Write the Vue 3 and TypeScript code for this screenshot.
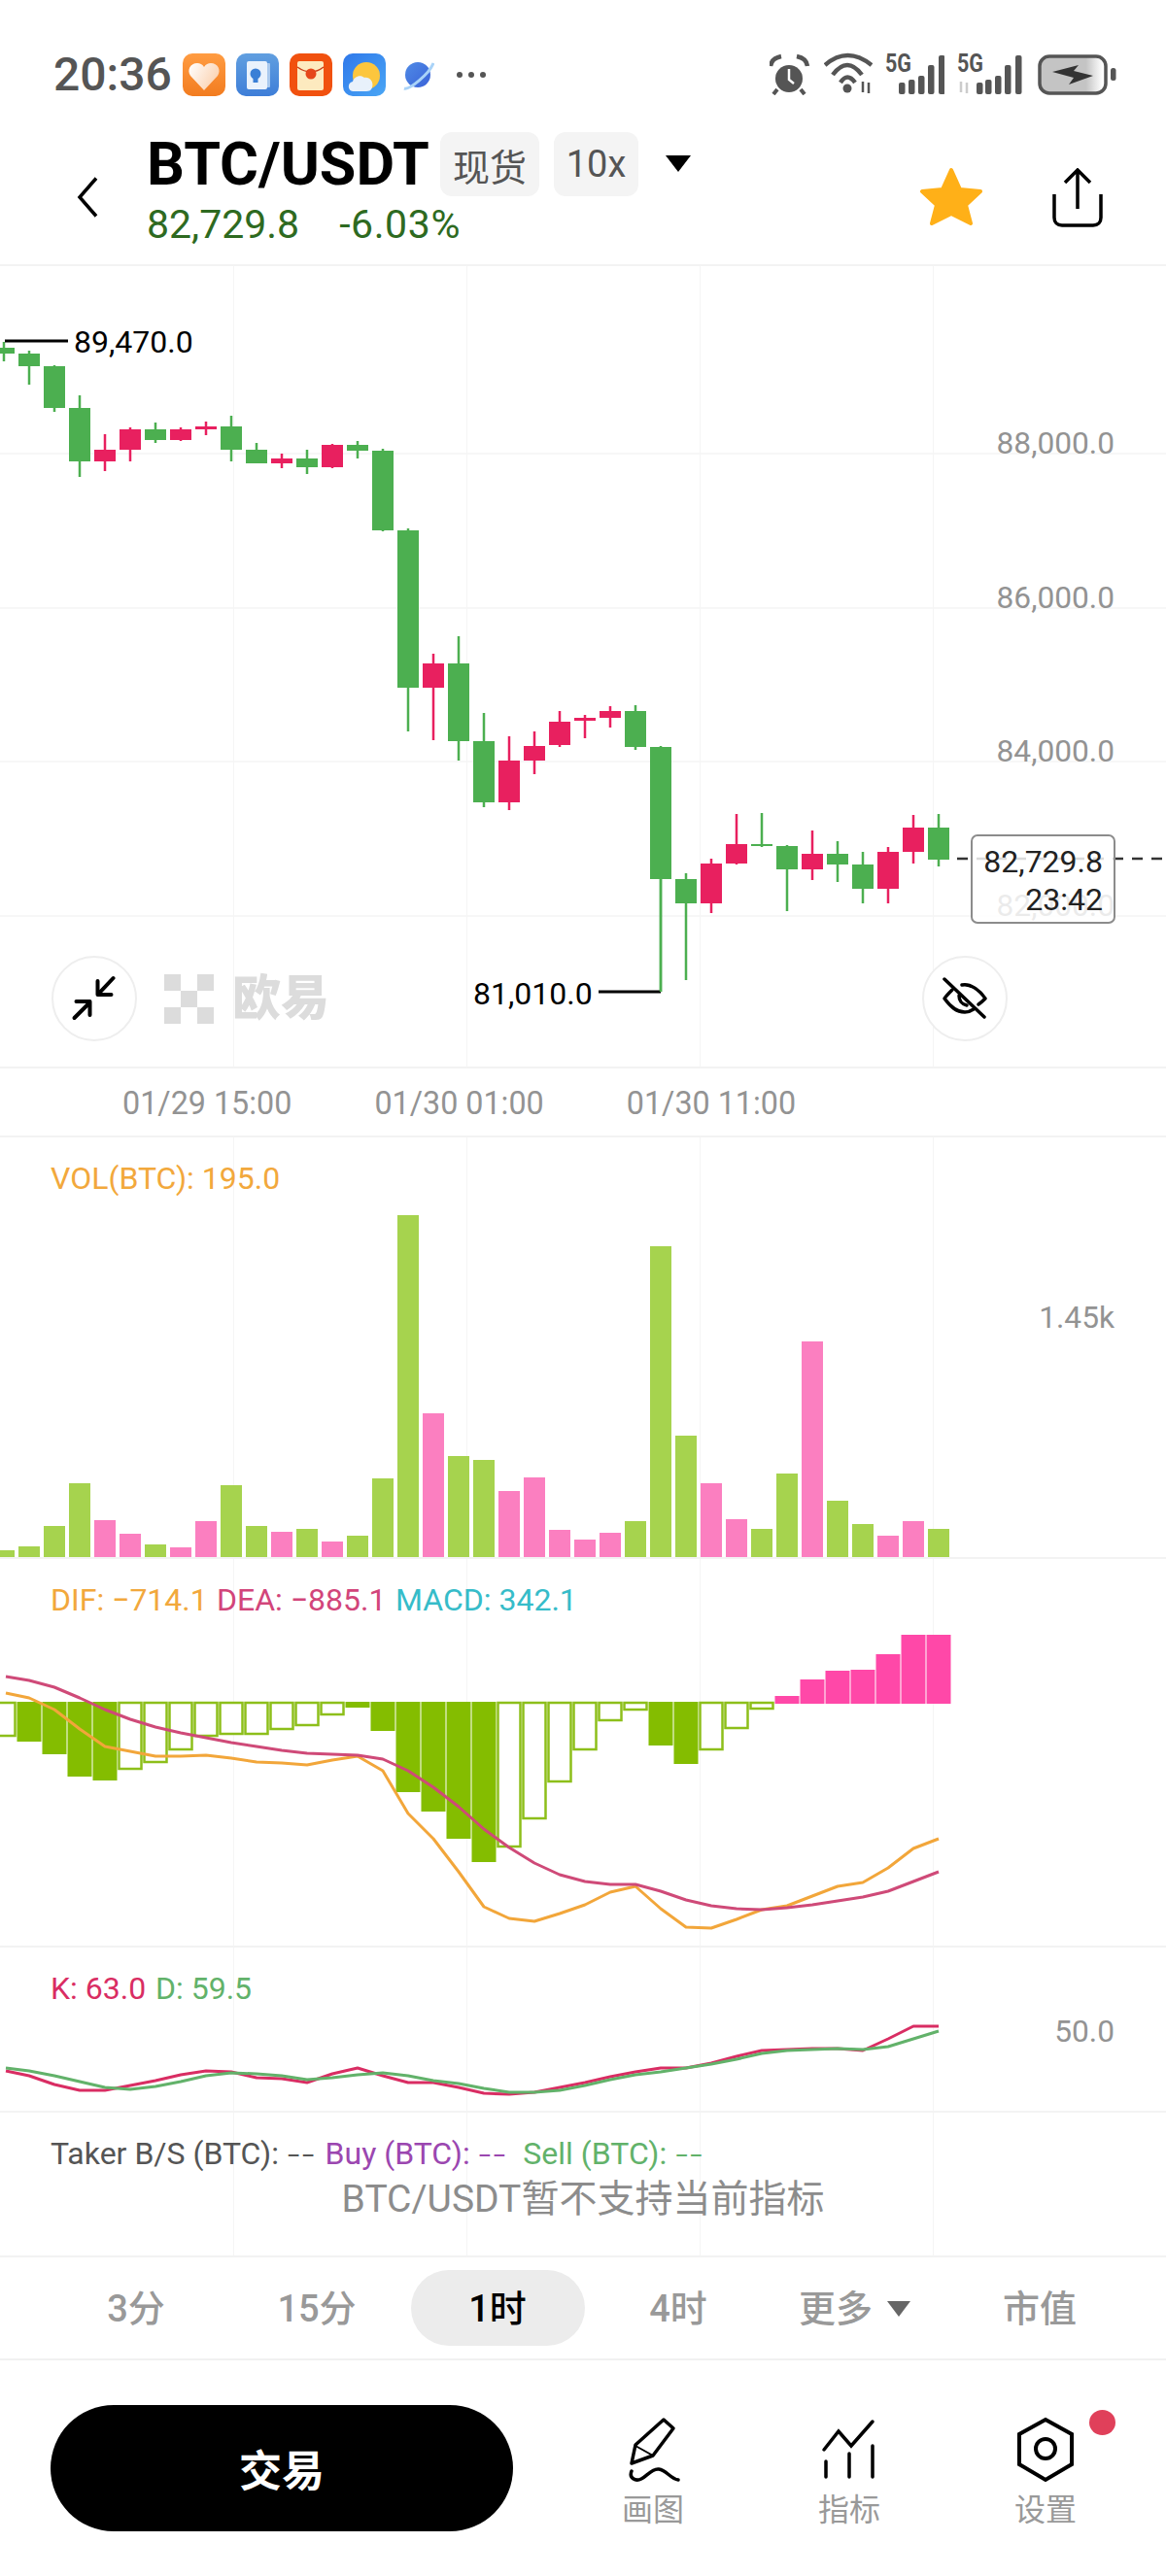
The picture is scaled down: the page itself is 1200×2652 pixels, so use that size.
<script setup lang="ts">
type Side = 'up' | 'down'
// bodyTop, bodyBottom, wickTop, wickBottom, colour
type Candle = [number, number, number, number, Side]

const STEP = 26
const xAt = (i: number) => 4 + STEP * i

const candles: Candle[] = [
  [358, 364, 352, 372, 'up'], [364, 377, 361, 396, 'up'], [377, 420, 376, 424, 'up'], [420, 475, 407, 491, 'up'],
  [463, 475, 447, 485, 'down'], [442, 463, 440, 475, 'down'], [442, 453, 435, 456, 'up'], [442, 453, 440, 454, 'down'],
  [439, 442, 434, 448, 'down'], [439, 463, 428, 475, 'up'], [463, 477, 456, 477, 'up'], [472, 477, 467, 482, 'down'],
  [472, 481, 463, 488, 'up'], [458, 481, 457, 482, 'down'], [458, 464, 454, 472, 'up'], [464, 546, 462, 547, 'up'],
  [546, 708, 544, 753, 'up'], [683, 708, 673, 762, 'down'], [683, 763, 655, 783, 'up'], [763, 826, 734, 831, 'up'],
  [783, 826, 758, 834, 'down'], [768, 783, 753, 797, 'down'], [743, 767, 732, 769, 'down'], [739, 742, 736, 760, 'down'],
  [732, 739, 727, 749, 'down'], [732, 769, 726, 772, 'up'], [769, 905, 768, 1021, 'up'], [905, 930, 899, 1009, 'up'],
  [889, 930, 884, 940, 'down'], [869, 889, 838, 890, 'down'], [869, 871, 837, 872, 'up'], [871, 895, 870, 938, 'up'],
  [879, 895, 855, 906, 'down'], [879, 890, 866, 908, 'up'], [890, 915, 877, 930, 'up'], [877, 915, 872, 930, 'down'],
  [852, 877, 839, 889, 'down'], [852, 885, 838, 892, 'up'],
]

const volumes = [7, 11, 32, 76, 38, 24, 13, 10, 37, 74, 32, 26, 29, 16, 22, 81, 352, 148, 104, 100, 68, 82, 28, 18, 25, 37, 320, 125, 76, 39, 29, 86, 222, 58, 34, 22, 37, 29]

// negative = below the zero line
const macd = [-34, -40, -53, -76, -80, -68, -61, -48, -34, -32, -32, -27, -23, -12, -5, -29, -92, -112, -140, -164, -148, -119, -81, -48, -18, -7, -44, -63, -48, -26, -6, 8, 25, 34, 35, 51, 71, 71]
const hollow = new Set([0, 5, 6, 7, 8, 9, 10, 11, 12, 13, 20, 21, 22, 23, 24, 25, 28, 29, 30])

const dea = [1726, 1730, 1737, 1748, 1760, 1770, 1778, 1784, 1789, 1794, 1798, 1802, 1805, 1806, 1807, 1811, 1823, 1840, 1860, 1883, 1902, 1918, 1930, 1937, 1940, 1940, 1947, 1956, 1962, 1965, 1966, 1964, 1961, 1957, 1953, 1947, 1937, 1927]
const dif = [1743, 1748, 1760, 1780, 1798, 1803, 1808, 1808, 1807, 1810, 1814, 1815, 1817, 1812, 1808, 1823, 1867, 1893, 1927, 1963, 1975, 1978, 1970, 1961, 1948, 1942, 1965, 1984, 1985, 1976, 1966, 1962, 1952, 1942, 1938, 1923, 1903, 1893]
const kLine = [2132, 2137, 2146, 2152, 2152, 2147, 2142, 2136, 2132, 2133, 2139, 2140, 2144, 2135, 2129, 2137, 2144, 2144, 2149, 2155, 2156, 2154, 2149, 2144, 2138, 2133, 2129, 2129, 2124, 2117, 2111, 2110, 2109, 2109, 2111, 2099, 2086, 2086]
const dLine = [2129, 2132, 2137, 2143, 2149, 2151, 2148, 2143, 2137, 2134, 2135, 2137, 2141, 2139, 2136, 2134, 2137, 2142, 2145, 2150, 2154, 2154, 2152, 2147, 2141, 2136, 2133, 2129, 2125, 2120, 2114, 2111, 2110, 2109, 2110, 2107, 2099, 2091]

const points = (ys: number[]) => ys.map((y, i) => `${Math.max(xAt(i), 6)},${y}`).join(' ')

const gridY = [467, 626, 784, 943]
const priceAxis = [
  { label: '88,000.0', y: 467 },
  { label: '86,000.0', y: 626 },
  { label: '84,000.0', y: 784 },
  { label: '82,000.0', y: 943 },
]
const dates = ['01/29 15:00', '01/30 01:00', '01/30 11:00']
const barTops = [85, 82, 78, 67, 57]
const signalA = [925, 935, 945, 955, 966]
const signalB = [1005, 1014, 1024, 1034, 1045]
const tabs = ['3分', '15分', '1时', '4时', '更多', '市值']
</script>

<template>
  <div class="page">
    <div class="status">
      <span class="clock">20:36</span>
      <svg class="app" width="44" height="44" viewBox="0 0 44 44">
        <defs>
          <linearGradient id="g-orange" x1="0" y1="0" x2="0" y2="1">
            <stop offset="0" stop-color="#ff9c42" /><stop offset="1" stop-color="#f27c20" />
          </linearGradient>
          <linearGradient id="g-heart" x1="0" y1="0" x2="1" y2="0.5">
            <stop offset="0" stop-color="#fff" /><stop offset="1" stop-color="#fbd3b2" />
          </linearGradient>
          <linearGradient id="g-blue" x1="0" y1="0" x2="0" y2="1">
            <stop offset="0" stop-color="#619fe0" /><stop offset="1" stop-color="#3e7ed8" />
          </linearGradient>
          <linearGradient id="g-sky" x1="0" y1="0" x2="1" y2="1">
            <stop offset="0" stop-color="#2f78ea" /><stop offset="1" stop-color="#4aa6f5" />
          </linearGradient>
          <linearGradient id="g-planet" x1="0" y1="0" x2="1" y2="1">
            <stop offset="0" stop-color="#4f8be6" /><stop offset="1" stop-color="#3a62d8" />
          </linearGradient>
          <linearGradient id="g-charge" x1="0" y1="0" x2="1" y2="0">
            <stop offset="0.700" stop-color="#c4c4c4" /><stop offset="0.950" stop-color="#fff" />
          </linearGradient>
        </defs>
        <rect width="44" height="44" rx="10" fill="url(#g-orange)" />
        <path d="M22 38 8 23c-4-6 0-13 7-13 3 0 5 1 7 4 2-3 4-4 7-4 7 0 11 7 7 13Z" fill="url(#g-heart)" />
      </svg>
      <svg class="app" width="44" height="44" viewBox="0 0 44 44">
        <rect width="44" height="44" rx="10" fill="url(#g-blue)" />
        <rect x="30" y="10" width="5" height="25" rx="1" fill="#a9c9ee" />
        <rect x="11" y="8" width="21" height="29" rx="2" fill="#eaf2fc" />
        <circle cx="20" cy="21" r="5.500" fill="#3a7fd6" />
        <rect x="17.500" y="26" width="5" height="4" fill="#3a7fd6" />
      </svg>
      <svg class="app" width="44" height="44" viewBox="0 0 44 44">
        <rect width="44" height="44" rx="10" fill="#f1510f" />
        <rect x="8" y="8" width="27" height="30" rx="2" fill="#fdeabf" />
        <path d="M8 14q14 10 27 0" fill="none" stroke="#c9401a" stroke-width="1.500" />
        <circle cx="22" cy="21" r="5.500" fill="#e6471a" />
      </svg>
      <svg class="app" width="44" height="44" viewBox="0 0 44 44">
        <rect width="44" height="44" rx="10" fill="url(#g-sky)" />
        <circle cx="24" cy="23" r="14" fill="#fcc63d" />
        <path d="M10 39c-5 0-6-9 0-10 1-5 8-8 12-4 5-1 10 4 8 10-1 3-3 4-6 4Z" fill="#e8f1fb" />
      </svg>
      <svg class="app app-planet" width="33" height="31" viewBox="0 0 33 31">
        <circle cx="16" cy="15" r="13" fill="url(#g-planet)" />
        <path d="M2 29c5 2 26-15 30-26" fill="none" stroke="#a9d3f8" stroke-width="3" />
      </svg>
      <svg class="dots" width="32" height="8" viewBox="0 0 32 8" fill="#555">
        <circle cx="4" cy="4" r="3" /><circle cx="16" cy="4" r="3" /><circle cx="28" cy="4" r="3" />
      </svg>

      <div class="status-right">
        <svg width="43" height="48" viewBox="792 50 43 48">
          <circle cx="812" cy="81" r="14" fill="#555" />
          <path d="M812 71v11l5 4" fill="none" stroke="#fff" stroke-width="2.500" />
          <path d="M793 68q1-8 11-10M831 68q-1-8-11-10" fill="none" stroke="#555" stroke-width="4.500" />
          <path d="m800 92-4 5M824 92l4 5" stroke="#555" stroke-width="4" />
        </svg>
        <svg width="50" height="48" viewBox="848 50 50 48" fill="none" stroke="#555" stroke-width="4.500">
          <path d="M849 67q23-20 48 0" />
          <path d="M857 77q15-20 30 0" />
          <path d="M865 85q7-11 15 0" />
          <circle cx="872" cy="91" r="4.500" fill="#555" stroke="none" />
          <path d="M888 84v11M894 85v11" stroke-width="2.500" />
        </svg>
        <svg width="61" height="48" viewBox="911 50 61 48">
          <text class="five-g" x="911" y="74" textLength="27" lengthAdjust="spacingAndGlyphs">5G</text>
          <rect v-for="(x, i) in signalA" :key="x" :x="x" :y="barTops[i]" width="6.500" :height="97 - barTops[i]" rx="2" fill="#555" />
        </svg>
        <svg width="70" height="48" viewBox="985 50 70 48">
          <text class="five-g" x="985" y="74" textLength="27" lengthAdjust="spacingAndGlyphs">5G</text>
          <path d="M989 84v11M995 85v11" stroke="#ccc" stroke-width="2.500" />
          <rect v-for="(x, i) in signalB" :key="x" :x="x" :y="barTops[i]" width="6.500" :height="97 - barTops[i]" rx="2" fill="#555" />
        </svg>
        <svg width="81" height="48" viewBox="1068 50 81 48">
          <rect x="1070" y="58" width="68" height="38" rx="10" fill="url(#g-charge)" stroke="#555" stroke-width="3.500" />
          <rect x="1143" y="70" width="5.500" height="13" rx="2.500" fill="#555" />
          <path d="m1083 74 27-7-5 6 20 5-25 9 5-7Z" fill="#333" />
        </svg>
      </div>
    </div>

    <header class="header">
      <svg class="back" width="23" height="42" viewBox="0 0 23 42">
        <path d="M20 1.500 3 21l17 19.500" fill="none" stroke="#000" stroke-width="3.500" />
      </svg>
      <div class="title-col">
        <div class="title-row">
          <h1 class="pair">BTC/USDT</h1>
          <span class="tag">现货</span>
          <span class="tag tag-lev">10x</span>
          <span class="caret" />
        </div>
        <div class="quote">
          <span>82,729.8</span>
          <span class="quote-pct">-6.03%</span>
        </div>
      </div>
      <svg class="star" width="66" height="60" viewBox="0 0 66 60">
        <path d="m33 3 9 20 21 2-15 14 5 19-20-10-20 10 5-19L3 25l21-2Z" fill="#ffb018" stroke="#ffb018" stroke-width="4" stroke-linejoin="round" />
      </svg>
      <svg class="share" width="52" height="61" viewBox="0 0 52 61" fill="none" stroke="#000" stroke-width="3.500">
        <path d="M2 27v24c0 5 3 8 8 8h32c5 0 8-3 8-8V27" />
        <path d="M26 2v40M13 15 26 2l13 13" />
      </svg>
    </header>

    <div class="panes">
      <section class="pane pane-main">
        <svg width="1200" height="824" viewBox="0 274 1200 824">
          <line v-for="y in gridY" :key="y" x1="0" x2="1200" :y1="y" :y2="y" class="grid" />
          <text v-for="a in priceAxis" :key="a.y" class="axis" x="1147" :y="a.y" text-anchor="end">{{ a.label }}</text>

          <g v-for="(c, i) in candles" :key="i" :class="c[4]">
            <rect :x="xAt(i) - 1.250" :y="c[2]" width="2.500" :height="c[3] - c[2]" />
            <rect :x="xAt(i) - 11" :y="c[0]" width="22" :height="c[1] - c[0]" />
          </g>

          <path d="M5 351h65M616 1021h64" stroke="#000" stroke-width="3" fill="none" />
          <path d="M680 1021V905" stroke="#4caf50" stroke-width="2.500" />
          <text class="mark" x="76" y="363">89,470.0</text>
          <text class="mark" x="487" y="1034">81,010.0</text>

          <path d="M985 884h999" stroke="#333" stroke-width="2.500" stroke-dasharray="11 9" />
        </svg>

        <div class="price-box">
          <span>82,729.8</span>
          <span>23:42</span>
        </div>

        <button class="round round-left">
          <svg width="48" height="48" viewBox="73.500 1005 48 48" fill="none" stroke="#000" stroke-width="4" stroke-linecap="round" stroke-linejoin="round">
            <path d="M117 1008 102 1024M101 1011v14h14" />
            <path d="M77 1049l16-16M79 1032h14v14" />
          </svg>
        </button>
        <div class="brand">
          <svg width="52" height="51" viewBox="0 0 52 51" fill="#dcdcdc">
            <rect width="17" height="17" /><rect x="34" width="17" height="17" />
            <rect x="17" y="17" width="17" height="17" />
            <rect y="34" width="17" height="17" /><rect x="34" y="34" width="17" height="17" />
          </svg>
          <span>欧易</span>
        </div>
        <button class="round round-right">
          <svg width="48" height="48" viewBox="969 1005 48 48" fill="none" stroke="#000" stroke-width="3.500" stroke-linecap="round" stroke-linejoin="round">
            <path d="M980 1020c-3 3-6 6-8 9 6 8 12 14 21 14 3 0 6-1 9-3" />
            <path d="M990 1015c8-2 18 5 24 14-2 2-4 4-7 6" />
            <path d="M987 1026c0 5 3 9 8 10" />
            <path d="m972 1009 41 39" />
          </svg>
        </button>
      </section>

      <section class="pane pane-axis">
        <span v-for="d in dates" :key="d">{{ d }}</span>
      </section>

      <section class="pane pane-vol">
        <svg width="1200" height="432" viewBox="0 1171 1200 432">
          <text class="legend" x="52" y="1224" fill="#f2a83c">VOL(BTC): 195.0</text>
          <text class="axis" x="1147" y="1367" text-anchor="end">1.45k</text>
          <rect
            v-for="(v, i) in volumes"
            :key="i"
            :x="xAt(i) - 11"
            :y="1603 - v"
            width="22"
            :height="v"
            :fill="candles[i][4] === 'up' ? '#a6d34e' : '#fb7fc0'"
          />
        </svg>
      </section>

      <section class="pane pane-macd">
        <svg width="1200" height="398" viewBox="0 1605 1200 398">
          <text class="legend" y="1658">
            <tspan x="52" fill="#f2a83c">DIF: −714.1</tspan>
            <tspan x="223" fill="#d2457a">DEA: −885.1</tspan>
            <tspan x="407" fill="#36bcc9">MACD: 342.1</tspan>
          </text>
          <template v-for="(m, i) in macd" :key="i">
            <rect v-if="m > 0" :x="xAt(i) - 12.500" :y="1754 - m" width="25" :height="m" fill="#ff48a8" />
            <rect v-else-if="hollow.has(i)" :x="xAt(i) - 11.500" y="1753" width="23" :height="-m" fill="#fff" stroke="#8dbf1a" stroke-width="2.500" />
            <rect v-else :x="xAt(i) - 12.500" y="1752" width="25" :height="1 - m" fill="#84bd00" />
          </template>
          <polyline :points="points(dif)" class="line" stroke="#f2a63a" />
          <polyline :points="points(dea)" class="line" stroke="#cf4a78" />
        </svg>
      </section>

      <section class="pane pane-kd">
        <svg width="1200" height="168" viewBox="0 2005 1200 168">
          <text class="legend" y="2058">
            <tspan x="52" fill="#d92d63">K: 63.0</tspan>
            <tspan x="160" fill="#62b26a">D: 59.5</tspan>
          </text>
          <text class="axis" x="1147" y="2102" text-anchor="end">50.0</text>
          <polyline :points="points(kLine)" class="line" stroke="#d92d63" />
          <polyline :points="points(dLine)" class="line" stroke="#62b26a" />
        </svg>
      </section>

      <section class="pane pane-taker">
        <p class="taker">
          <span class="t-dark">Taker B/S (BTC): <b>−−</b></span>
          <span class="t-buy">Buy (BTC): <b>−−</b></span>
          <span class="t-sell">Sell (BTC): <b>−−</b></span>
        </p>
        <p class="unsupported">BTC/USDT暂不支持当前指标</p>
      </section>
    </div>

    <nav class="tabs">
      <span v-for="t in tabs" :key="t" class="tab" :class="{ active: t === '1时', more: t === '更多' }">
        {{ t }}<i v-if="t === '更多'" class="tab-caret" />
      </span>
    </nav>

    <footer class="footer">
      <button class="trade">交易</button>
      <div class="tool">
        <svg width="60" height="68" viewBox="642 2488 60 68" fill="none" stroke="#000" stroke-width="3.500" stroke-linejoin="round" stroke-linecap="round">
          <path d="m683 2491 10 9-21 28-22 8 4-19Z" />
          <path d="m654 2518 18 10" stroke-width="2" />
          <path d="M650 2544c-3 7 4 11 10 8 6-3 11-11 18-10 8 1 12 10 20 11" />
        </svg>
        <span>画图</span>
      </div>
      <div class="tool">
        <svg width="60" height="68" viewBox="845 2488 60 68" fill="none" stroke="#000" stroke-width="3.500" stroke-linecap="round">
          <path d="m849 2522 15-19 13 15 22-25" />
          <path d="M851 2534v16M875 2526v24M899 2518v32" />
        </svg>
        <span>指标</span>
      </div>
      <div class="tool">
        <svg width="60" height="68" viewBox="1046 2487 60 68" fill="none" stroke="#000" stroke-width="4">
          <path d="m1076 2490 27 15v31l-27 16-27-16v-31Z" />
          <circle cx="1076" cy="2520" r="10" />
        </svg>
        <span>设置</span>
        <i class="badge" />
      </div>
    </footer>
  </div>
</template>

<style scoped>
.page {
  width: 1200px;
  height: 2652px;
  background: #fff;
  overflow: hidden;
  font-family: Roboto, "Noto Sans CJK SC", sans-serif;
}

/* status bar */
.status {
  height: 125px;
  box-sizing: border-box;
  padding: 55px 51px 0 55px;
  display: flex;
  align-items: flex-start;
}
.clock {
  font-size: 48px;
  line-height: 44px;
  font-weight: 500;
  color: #555;
  width: 133px;
}
.app {
  margin-right: 11px;
  flex-shrink: 0;
}
.app-planet {
  margin: 7px 0 0 6px;
}
.dots {
  margin: 18px 0 0 22px;
}
.status-right {
  margin-left: auto;
  display: flex;
  gap: 13px;
  margin-top: -5px;
}
.five-g {
  font-size: 25px;
  font-weight: 700;
  fill: #555;
}

/* header */
.header {
  height: 147px;
  border-bottom: 2px solid #f3f3f3;
  display: flex;
  align-items: flex-start;
  padding-left: 79px;
}
.back {
  margin: 57px 49px 0 0;
}
.title-row {
  display: flex;
  align-items: center;
  height: 66px;
  margin-top: 11px;
}
.pair {
  margin: 0 13px 0 0;
  font-size: 61px;
  line-height: 66px;
  font-weight: 700;
  color: #000;
  white-space: nowrap;
  width: 289px;
}
.tag {
  height: 66px;
  width: 102px;
  border-radius: 12px;
  background: #f4f4f4;
  color: #555;
  font-size: 38px;
  display: flex;
  align-items: center;
  justify-content: center;
}
.tag-lev {
  width: 87px;
  margin-left: 15px;
}
.caret {
  margin: -2px 0 0 28px;
  border-left: 13px solid transparent;
  border-right: 13px solid transparent;
  border-top: 17px solid #000;
}
.quote {
  display: flex;
  gap: 41px;
  margin-top: 2px;
  font-size: 41px;
  line-height: 54px;
  color: #2e6a21;
}
.quote-pct {
  letter-spacing: 0.6px;
}
.star {
  margin: 47px 0 0 auto;
}
.share {
  margin: 48px 65px 0 71px;
}

/* chart panes */
.panes {
  background:
    linear-gradient(#f5f5f5, #f5f5f5) 240px 0 / 1px 100% no-repeat,
    linear-gradient(#f5f5f5, #f5f5f5) 480px 0 / 1px 100% no-repeat,
    linear-gradient(#f5f5f5, #f5f5f5) 720px 0 / 1px 100% no-repeat,
    linear-gradient(#f5f5f5, #f5f5f5) 960px 0 / 1px 100% no-repeat;
}
.pane {
  position: relative;
  border-bottom: 2px solid #f3f3f3;
}
.pane svg {
  display: block;
}
.pane-main {
  height: 824px;
}
.pane-axis {
  height: 67px;
  padding-top: 2px;
  background: #fff;
  display: flex;
  align-items: center;
  gap: 85px;
  padding-left: 126px;
  font-size: 32.300px;
  color: #939393;
}
.pane-vol {
  height: 432px;
}
.pane-macd {
  height: 398px;
}
.pane-kd {
  height: 168px;
}
.pane-taker {
  height: 147px;
}
.grid {
  stroke: #f5f5f5;
  stroke-width: 1.500;
}
.axis {
  font-size: 31.700px;
  fill: #939393;
}
.mark {
  font-size: 32px;
  fill: #000;
}
.legend {
  font-size: 32px;
}
.up {
  fill: #4caf50;
}
.down {
  fill: #e8205f;
}
.line {
  fill: none;
  stroke-width: 3;
  stroke-linejoin: round;
}

.price-box {
  position: absolute;
  left: 999px;
  top: 585px;
  width: 149px;
  height: 92px;
  box-sizing: border-box;
  border: 2px solid #8c8c8c;
  border-radius: 7px;
  background: rgba(255, 255, 255, 0.82);
  padding: 7px 11px 0 0;
  display: flex;
  flex-direction: column;
  align-items: flex-end;
  font-size: 32px;
  line-height: 39px;
  color: #222;
}
.round {
  position: absolute;
  top: 710px;
  width: 88px;
  height: 88px;
  padding: 0;
  border: 2px solid #eee;
  border-radius: 50%;
  background: #fff;
  display: flex;
  align-items: center;
  justify-content: center;
}
.round-left {
  left: 53px;
}
.round-right {
  left: 949px;
}
.brand {
  position: absolute;
  left: 169px;
  top: 729px;
  display: flex;
  align-items: center;
  gap: 18px;
  color: #dcdcdc;
  font-size: 50px;
  line-height: 51px;
  font-weight: 900;
}

.taker {
  margin: 0;
  padding: 23px 0 0 52px;
  display: flex;
  gap: 10px;
  font-size: 32px;
  line-height: 38px;
  white-space: nowrap;
}
.taker b {
  font-size: 26px;
  font-weight: 400;
}
.t-dark {
  color: #555;
}
.t-buy {
  color: #9b47b0;
}
.t-sell {
  margin-left: 7px;
  color: #62b26a;
}
.unsupported {
  margin: 0;
  padding-top: 3px;
  text-align: center;
  font-size: 39px;
  line-height: 46px;
  color: #8c8c8c;
}

/* interval tabs */
.tabs {
  height: 104px;
  border-bottom: 2px solid #f1f1f1;
  padding-left: 47px;
  display: flex;
  align-items: center;
}
.tab {
  width: 186px;
  height: 78px;
  padding-bottom: 5px;
  box-sizing: border-box;
  display: flex;
  align-items: center;
  justify-content: center;
  color: #999;
  font-size: 38px;
  font-weight: 500;
}
.tab.more {
  padding-right: 9px;
}
.tab.active {
  width: 179px;
  margin: 0 3.500px;
  border-radius: 39px;
  background: #ececec;
  color: #000;
}
.tab-caret {
  margin: 7px 0 0 15px;
  border-left: 12px solid transparent;
  border-right: 12px solid transparent;
  border-top: 16px solid #666;
}

/* bottom actions */
.footer {
  display: flex;
  align-items: flex-start;
  padding: 46px 0 0 52px;
}
.trade {
  width: 476px;
  height: 130px;
  border: 0;
  border-radius: 65px;
  background: #000;
  color: #fff;
  font: 700 44px Roboto, "Noto Sans CJK SC", sans-serif;
  margin-right: 43px;
}
.tool {
  position: relative;
  width: 202px;
  padding-top: 12px;
  display: flex;
  flex-direction: column;
  align-items: center;
  color: #999;
  font-size: 32px;
  line-height: 40px;
}
.tool span {
  margin-top: 8px;
}
.badge {
  position: absolute;
  left: 146px;
  top: 5px;
  width: 27px;
  height: 26px;
  border-radius: 50%;
  background: #e0405a;
}
</style>

<style>
html,
body {
  background: #fff;
}
</style>
